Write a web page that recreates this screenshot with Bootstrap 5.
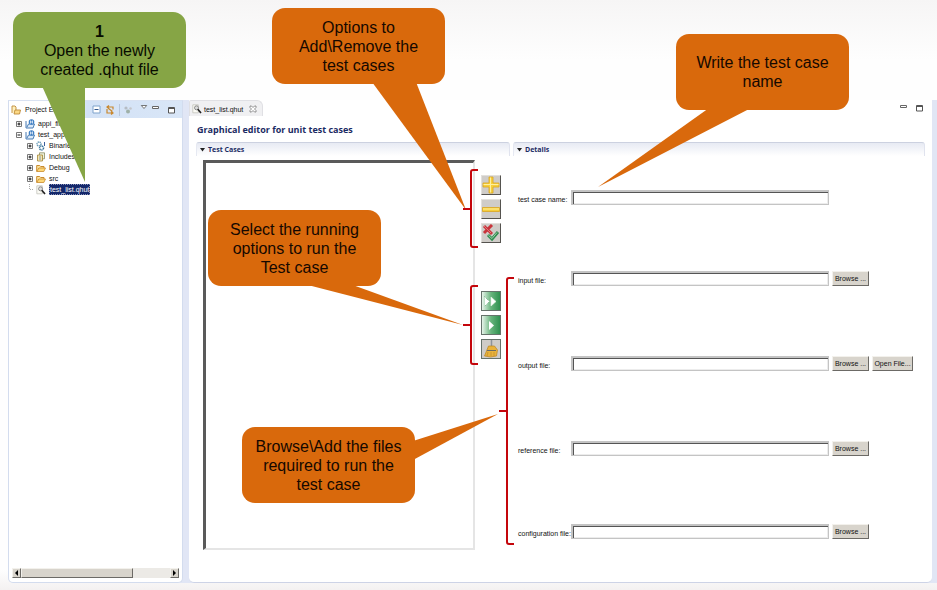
<!DOCTYPE html>
<html lang="en">
<head>
<meta charset="utf-8">
<meta name="viewport" content="width=device-width, initial-scale=1">
<title>Graphical editor for unit test cases</title>
<link href="https://cdn.jsdelivr.net/npm/bootstrap@5.3.0/dist/css/bootstrap.min.css" rel="stylesheet">
<style>
  body { font-family: "Liberation Sans", sans-serif; font-size: 7px; line-height: 11px; color: #111; background: #fdfdfd; }
  .stage { padding: 100px 0 7px 8px; background: linear-gradient(180deg, #f6f5f5 0, #fefefe 60px, #fefefe 570px, #f4f1f1 590px); }
  .workbench { background: #e1e6f5; gap: 6px; padding-right: 5px; border-radius: 0 0 0 6px; }
  .pane { background: #fff; border-bottom: 1px solid #cdd3e6; border-radius: 0 0 5px 5px; }
  .explorer { width: 175px; border: 1px solid #d3dcee; border-top-color: #d9e2f2; }
  .pane-head { height: 17px; background: linear-gradient(90deg, #fff 0, #fff 60px, #d3e2f6 78px, #d9e6f7 100%); padding: 0 6px 0 2px; }
  .tree { padding: 0 0 0 7px; }
  .tree li { height: 11px; display: flex; align-items: center; gap: 3px; white-space: nowrap; }
  .tree .child { padding-left: 11px; }
  .tree svg, .pane-head svg, .tab svg { flex: none; }
  .picked { background: #14286b; color: #fff; padding: 0 1px; outline: 1px dotted #8a93b8; outline-offset: -1px; }
  .hscroll { margin: 0 3px 4px; height: 10px; background: #eceae6; }
  .bevel { background: #d8d4cc; border: 1px solid; border-color: #f3f1ec #6c6a66 #6c6a66 #f3f1ec; color: #111; border-radius: 0; padding: 0; }
  .hscroll .bevel { width: 9px; line-height: 0; }
  .hscroll .thumb { width: 112px; }
  .tab { height: 16px; padding: 1px 5px 0 2px; gap: 2px; background: #f0f0f2; border: 1px solid #e0e0e4; border-bottom: 0; border-radius: 2px 6px 0 0; }
  .title { font: bold 9px/12px "Open Sans", sans-serif; color: #1b2b63; margin: 8px 0 6px 8px; }
  .sections { display: grid; grid-template-columns: 314fr 412fr; column-gap: 3px; padding: 0 7px 0 7px; }
  .section-head { height: 14px; padding-left: 3px; gap: 3px; border: 1px solid #ccd1e0; border-bottom: 0; border-left-color: #e6e9f2; border-right-color: #e0e3ee; border-radius: 3px 3px 0 0; background: linear-gradient(#e7eaf3, #fff); font: bold 7px/12px "Open Sans", sans-serif; color: #1b2b63; }
  .case-list { border: 2px solid #e5e5e5; border-top: 3px solid #5a5a5a; border-left: 3px solid #5a5a5a; margin: 4px 6px 32px 7px; background: #fff; }
  .tools { width: 20px; margin-right: 9px; padding-top: 19px; gap: 4px; }
  .tool { width: 20px; height: 20px; padding: 0; border: 1px solid; border-color: #e2e0dc #55534f #55534f #e2e0dc; background: #cfccc8; line-height: 0; }
  .tool.run { border-color: #66736b; }
  .tools .second { margin-top: 44px; }
  .fields { display: grid; grid-template-rows: 81fr 85fr 85fr 83fr 15px; padding: 34px 10px 43px 5px; }
  .field-row label { width: 53px; white-space: nowrap; }
  .field-row input { height: 15px; min-width: 0; border: 1px solid #c4c4c4; padding: 0 4px; font-size: 7px; box-shadow: inset 1px 1px 0 #c4c4c4, inset 3px 3px 0 -1px #555, inset -1px -1px 0 #ececec; }
  .acts { width: 86px; padding-left: 3px; gap: 3px; }
  .acts .bevel { height: 15px; width: 37px; line-height: 12px; white-space: nowrap; }
  .acts .wide { width: 41px; }
  .notes { inset: 0; pointer-events: none; }
  .note { position: absolute; width: 173px; height: 76px; border-radius: 13px; background: #d9690c; color: #150800; font: 16px/19px "Liberation Sans", sans-serif; text-align: center; display: flex; flex-direction: column; justify-content: center; }
  .note.green { background: #86a545; color: #080c00; left: 13px; top: 12px; }
  .n-add { left: 272px; top: 8px; }
  .n-run { left: 208px; top: 210px; }
  .n-browse { left: 242px; top: 427px; }
  .n-name { left: 676px; top: 34px; }
</style>
<script src="https://cdn.jsdelivr.net/npm/bootstrap@5.3.0/dist/js/bootstrap.bundle.min.js"></script>
</head>
<body>
<svg width="0" height="0" class="position-absolute" aria-hidden="true">
  <symbol id="plus" viewBox="0 0 6 6"><path d="M.5.5h5v5h-5z" fill="#fff" stroke="#777"/><path d="M1.500 3h3M3 1.500v3" stroke="#111"/></symbol>
  <symbol id="minus" viewBox="0 0 6 6"><path d="M.5.5h5v5h-5z" fill="#fff" stroke="#777"/><path d="M1.500 3h3" stroke="#111"/></symbol>
  <symbol id="project" viewBox="0 0 10 10"><path d="M1 2v7h7l1.500-4H3.500L2 8" fill="#dceaf8" stroke="#4a7db5"/><circle cx="6.500" cy="3" r="2.800" fill="#3f7fc4"/><path d="M5.500 1.500v3M7.500 1.500v3M5.500 3h2" stroke="#fff" stroke-width=".7"/></symbol>
  <symbol id="folder" viewBox="0 0 10 10"><path d="M.7 8.500V2.500h3l1 1H8v1.500" fill="#fbe3a0" stroke="#c98a2c"/><path d="M.8 8.500l2-3.500h6.700L7.800 8.500z" fill="#fdd778" stroke="#c98a2c" stroke-width=".8"/></symbol>
  <symbol id="testfile" viewBox="0 0 10 10"><path d="M.8.8h5.500v8H.8z" fill="#fafaf4" stroke="#bdbdb4" stroke-width=".7"/><circle cx="4.500" cy="3.800" r="2" fill="#ddd" stroke="#777" stroke-width=".8"/><path d="M5.800 5.300L9 9" stroke="#222" stroke-width="1.700"/></symbol>
  <symbol id="minwin" viewBox="0 0 8 8"><path d="M.5 1.500h6v2h-6z" fill="#fff" stroke="#666"/></symbol>
  <symbol id="maxwin" viewBox="0 0 8 8"><path d="M.5 1.500h6v5.500h-6zM.5 2.500h6" fill="#fff" stroke="#555"/></symbol>
</svg>

<div class="stage position-relative min-vh-100 d-flex flex-column">
  <main class="workbench d-flex flex-grow-1">
    <aside class="pane explorer d-flex flex-column flex-shrink-0">
      <div class="pane-head d-flex align-items-center">
        <svg width="10" height="10" viewBox="0 0 10 10"><path d="M1 8V1h3l1 1v5" fill="#fff0bd" stroke="#bd8a38" stroke-width=".9"/><path d="M3 9l1-4h5.500L8.500 9z" fill="#fcd985" stroke="#bd8a38" stroke-width=".9"/></svg>
        <span class="ps-1 text-nowrap">Project Explorer</span>
        <div class="ms-auto d-flex align-items-center gap-1">
          <svg width="9" height="9" viewBox="0 0 9 9"><path d="M1 1h7v7H1z" fill="#fff" stroke="#7fa3cc"/><path d="M2.500 4.500h4" stroke="#2f558c"/></svg>
          <svg width="10" height="10" viewBox="0 0 10 10"><path d="M8 4.500V2H2M4 .5L2 2l2 1.700M2 4v4h6M6 6.500L8 8 6 9.500M3.500 3.500l4 3" fill="none" stroke="#c9872c" stroke-width="1.200"/></svg>
          <svg width="13" height="12" viewBox="0 0 13 12"><path d="M.5 0v12" stroke="#b8c6da"/><circle cx="7" cy="4" r="1.600" fill="#b5bcc4"/><circle cx="9" cy="7.500" r="2" fill="#9fb0a8"/><circle cx="11.500" cy="4.500" r="1.300" fill="#c4c6ca"/></svg>
          <svg class="ms-1" width="8" height="12" viewBox="0 0 8 12"><path d="M1.300 1.500h5.400L4 4.500z" fill="#fff" stroke="#555" stroke-width=".8"/></svg>
          <svg width="8" height="10"><use href="#minwin" width="8" height="8"/></svg>
          <svg class="ms-1" width="8" height="8"><use href="#maxwin"/></svg>
        </div>
      </div>
      <ul class="tree list-unstyled mb-0 flex-grow-1">
        <li><svg width="6" height="6"><use href="#plus"/></svg><svg width="10" height="10"><use href="#project"/></svg><span>appi_first</span></li>
        <li><svg width="6" height="6"><use href="#minus"/></svg><svg width="10" height="10"><use href="#project"/></svg><span>test_appi</span></li>
        <li class="child"><svg width="6" height="6"><use href="#plus"/></svg><svg width="10" height="10" viewBox="0 0 10 10"><circle cx="3" cy="3" r="2" fill="none" stroke="#6a9bb8" stroke-width="1.500" stroke-dasharray="1.200 .6"/><circle cx="5.500" cy="7" r="2" fill="none" stroke="#3a759c" stroke-width="1.500" stroke-dasharray="1.200 .6"/><path d="M8.500 1v4" stroke="#3a5f9c"/></svg><span>Binaries</span></li>
        <li class="child"><svg width="6" height="6"><use href="#plus"/></svg><svg width="10" height="10" viewBox="0 0 10 10"><path d="M3.500.8h5v6h-5z" fill="#eef2dc" stroke="#8b8b60" stroke-width=".8"/><path d="M1.500 3h5v6h-5z" fill="#f8e7ae" stroke="#a08438" stroke-width=".8"/><path d="M3 5h2M3 7h2" stroke="#5b83b0" stroke-width=".8"/></svg><span>Includes</span></li>
        <li class="child"><svg width="6" height="6"><use href="#plus"/></svg><svg width="10" height="10"><use href="#folder"/></svg><span>Debug</span></li>
        <li class="child"><svg width="6" height="6"><use href="#plus"/></svg><svg width="10" height="10"><use href="#folder"/></svg><span>src</span></li>
        <li class="child"><svg width="6" height="11" viewBox="0 0 6 11"><path d="M2.500 0v5.500H6" fill="none" stroke="#aaa" stroke-dasharray="1 1"/></svg><svg width="10" height="10"><use href="#testfile"/></svg><span class="picked">test_list.qhut</span></li>
      </ul>
      <div class="hscroll d-flex">
        <button class="bevel" type="button" aria-label="Scroll left"><svg width="5" height="6"><path d="M4 0v6L1 3z"/></svg></button>
        <div class="bevel thumb"></div>
        <button class="bevel ms-auto" type="button" aria-label="Scroll right"><svg width="5" height="6"><path d="M1 0v6l3-3z"/></svg></button>
      </div>
    </aside>

    <section class="pane d-flex flex-column flex-grow-1">
      <div class="d-flex">
        <div class="tab d-flex align-items-center">
          <svg width="10" height="10"><use href="#testfile"/></svg>
          <span>test_list.qhut</span>
          <svg class="ms-1" width="8" height="8" viewBox="0 0 8 8"><path d="M1 1h1.500L4 2.500 5.500 1H7v1.500L5.500 4 7 5.500V7H5.500L4 5.500 2.500 7H1V5.500L2.500 4 1 2.500z" fill="#fff" stroke="#777" stroke-width=".8"/></svg>
        </div>
        <div class="ms-auto d-flex align-items-center gap-2 pe-2">
          <svg width="8" height="8"><use href="#minwin"/></svg>
          <svg width="8" height="8"><use href="#maxwin"/></svg>
        </div>
      </div>
      <h1 class="title">Graphical editor for unit test cases</h1>
      <div class="sections flex-grow-1">
        <div class="d-flex flex-column">
          <h2 class="section-head d-flex align-items-center mb-0"><svg width="5" height="4"><path d="M0 0h5L2.500 3.500z" fill="#222"/></svg>Test Cases</h2>
          <div class="d-flex flex-grow-1">
            <div class="case-list flex-grow-1"></div>
            <div class="tools d-flex flex-column">
              <button class="tool" type="button" aria-label="Add test case"><svg width="18" height="18"><path d="M7 1h4v6h6v4h-6v6H7v-6H1V7h6z" fill="#f7cf3c" stroke="#dba520" stroke-width=".8"/><path d="M8.500 1.500v15M1.500 8.500h15" stroke="#fff0a0"/></svg></button>
              <button class="tool" type="button" aria-label="Remove test case"><svg width="18" height="18"><path d="M.5 7.500h17v4H.5z" fill="#f7cf3c" stroke="#dba520" stroke-width=".8"/><path d="M1 9h16" stroke="#fff0a0"/></svg></button>
              <button class="tool" type="button" aria-label="Toggle selection"><svg width="18" height="18" fill="none"><path d="M2 2l8 8M10 1L2 9" stroke="#c9343b" stroke-width="3"/><path d="M2 2l7 7" stroke="#e2797b"/><path d="M6 11l4 4 6-7" stroke="#2f8c50" stroke-width="3"/><path d="M6.500 11.500l3.500 3 5-6" stroke="#b5dfb9" stroke-width=".8"/></svg></button>
              <button class="tool run second" type="button" aria-label="Run all"><svg width="18" height="18"><defs><linearGradient id="g"><stop stop-color="#e7f4ea"/><stop offset=".5" stop-color="#67b47c"/><stop offset="1" stop-color="#2f9150"/></linearGradient></defs><path fill="url(#g)" d="M0 0h18v18H0z"/><path d="M3 5l4.500 4.500L3 14M9 5l5 4.500L9 14z" fill="#fff" stroke="#dff0e2" stroke-width=".7"/><path d="M2.500 4.500l5 5-5 5" fill="none" stroke="#4a9962" stroke-width=".8" stroke-dasharray="1 1"/></svg></button>
              <button class="tool run" type="button" aria-label="Run selected"><svg width="18" height="18"><path fill="url(#g)" d="M0 0h18v18H0z"/><path d="M7 5l5 4.500L7 14z" fill="#fff"/></svg></button>
              <button class="tool run" type="button" aria-label="Clear results"><svg width="18" height="18"><path d="M9.500 0v6" stroke="#8d9299" stroke-width="1.500"/><path d="M6.500 6h6l3 4-1 6-6 1-6-1 2-5z" fill="#e9b23a" stroke="#b98424" stroke-width=".7"/><path d="M5 10.500h9" stroke="#6b6b62"/><path d="M6 12l-1 4M9 12v4M12 12v4" stroke="#c4922c" stroke-width=".8"/></svg></button>
            </div>
          </div>
        </div>
        <div class="d-flex flex-column">
          <h2 class="section-head d-flex align-items-center mb-0"><svg width="5" height="4"><path d="M0 0h5L2.500 3.500z" fill="#222"/></svg>Details</h2>
          <form class="fields flex-grow-1">
            <div class="field-row d-flex align-items-start"><label for="f1" class="pt-1">test case name:</label><input id="f1" class="flex-grow-1" type="text"><div class="acts"></div></div>
            <div class="field-row d-flex align-items-start"><label for="f2" class="pt-1">input file:</label><input id="f2" class="flex-grow-1" type="text"><div class="acts d-flex"><button class="bevel" type="button">Browse ...</button></div></div>
            <div class="field-row d-flex align-items-start"><label for="f3" class="pt-1">output file:</label><input id="f3" class="flex-grow-1" type="text"><div class="acts d-flex"><button class="bevel" type="button">Browse ...</button><button class="bevel wide" type="button">Open File...</button></div></div>
            <div class="field-row d-flex align-items-start"><label for="f4" class="pt-1">reference file:</label><input id="f4" class="flex-grow-1" type="text"><div class="acts d-flex"><button class="bevel" type="button">Browse ...</button></div></div>
            <div class="field-row d-flex align-items-start"><label for="f5" class="pt-1">configuration file:</label><input id="f5" class="flex-grow-1" type="text"><div class="acts d-flex"><button class="bevel" type="button">Browse ...</button></div></div>
          </form>
        </div>
      </div>
    </section>
  </main>

  <!-- Callouts and brackets laid over the workbench -->
  <div class="notes position-absolute">
    <svg class="position-absolute" width="937" height="590" aria-hidden="true">
      <path d="M42 86h43v96z" fill="#86a545"/>
      <g fill="#d9690c"><path d="M372 82h44l50 128z"/><path d="M304 284h46l113 41z"/><path d="M413 441v19l85-46z"/><path d="M709 108h42L598 187z"/></g>
      <g fill="none" stroke="#c4060c" stroke-width="2" stroke-linejoin="round">
        <path d="M478 170h-5q-2 0-2 2v73q0 2 2 2h5M463 209h8"/>
        <path d="M478 286h-5q-2 0-2 2v74q0 2 2 2h5M463 325h8"/>
        <path d="M514 278h-5q-2 0-2 2v262q0 2 2 2h5M499 411h8"/>
      </g>
    </svg>
    <div class="note green"><strong>1</strong><span>Open the newly<br>created .qhut file</span></div>
    <div class="note n-add">Options to<br>Add\Remove the<br>test cases</div>
    <div class="note n-run">Select the running<br>options to run the<br>Test case</div>
    <div class="note n-browse">Browse\Add the files<br>required to run the<br>test case</div>
    <div class="note n-name">Write the test case<br>name</div>
  </div>
</div>
</body>
</html>
